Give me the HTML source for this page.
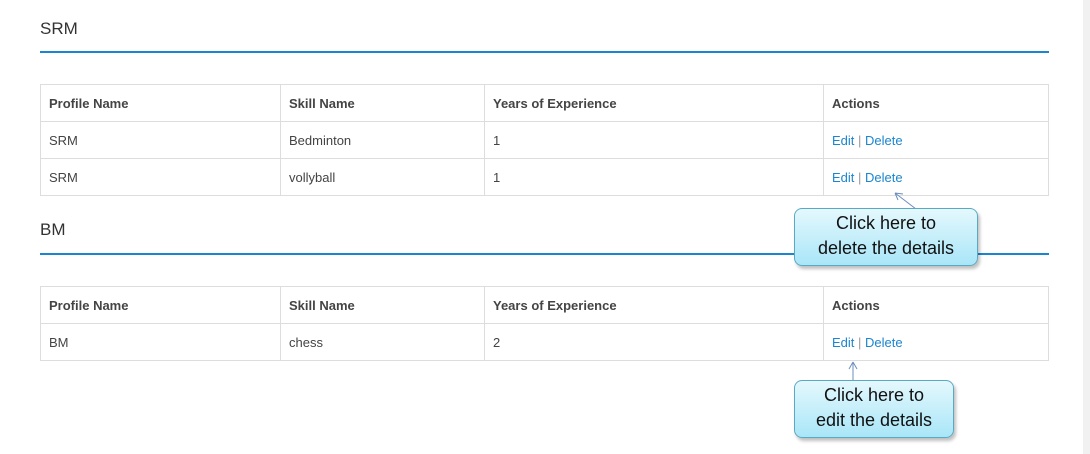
<!DOCTYPE html><html><head><style>
body{margin:0;width:1090px;height:454px;background:#fff;font-family:"Liberation Sans",sans-serif;position:relative;overflow:hidden}
.sb{position:absolute;left:1083px;top:0;width:7px;height:454px;background:#f1f1f1}
h2{position:absolute;left:40px;margin:0;font-size:17px;font-weight:normal;color:#333}
.line{position:absolute;left:40px;width:1009px;height:2px;background:#1a86d0}
table{position:absolute;left:40px;width:1009px;border-collapse:collapse;font-size:13px;color:#444}
td,th{border:1px solid #ddd;height:36px;padding:0 0 0 8px;text-align:left}
th{font-weight:bold;color:#444}
a{color:#1a86d0;text-decoration:none}
.p{color:#999}
.c{position:absolute;border:1px solid #5aa9c4;border-radius:8px;background:linear-gradient(#e4f8fd,#a9e6f8);box-shadow:2px 3px 3px rgba(0,0,0,.25);text-align:center;font-size:18px;line-height:25px;color:#111;padding-top:2px;box-sizing:border-box}
</style></head><body>
<div class="sb"></div>
<h2 style="top:19px">SRM</h2><div class="line" style="top:51px"></div>
<table style="top:84px"><tr><th style="width:231px">Profile Name</th><th style="width:195px">Skill Name</th><th style="width:330px">Years of Experience</th><th>Actions</th></tr>
<tr><td>SRM</td><td>Bedminton</td><td>1</td><td><a>Edit</a> <span class="p">|</span> <a>Delete</a></td></tr>
<tr><td>SRM</td><td>vollyball</td><td>1</td><td><a>Edit</a> <span class="p">|</span> <a>Delete</a></td></tr></table>
<h2 style="top:220px">BM</h2><div class="line" style="top:253px"></div>
<table style="top:286px"><tr><th style="width:231px">Profile Name</th><th style="width:195px">Skill Name</th><th style="width:330px">Years of Experience</th><th>Actions</th></tr>
<tr><td>BM</td><td>chess</td><td>2</td><td><a>Edit</a> <span class="p">|</span> <a>Delete</a></td></tr></table>
<svg style="position:absolute;left:0;top:0" width="1090" height="454"><g stroke="#6b8fbf" stroke-width="1" fill="none"><path d="M916 209L895 193M895 193l8 1M895 193l3 7"/><path d="M853 381V362M853 362l-4 7M853 362l4 7"/></g></svg>
<div class="c" style="left:794px;top:208px;width:184px;height:58px">Click here to<br>delete the details</div>
<div class="c" style="left:794px;top:380px;width:160px;height:58px">Click here to<br>edit the details</div>
</body></html>
